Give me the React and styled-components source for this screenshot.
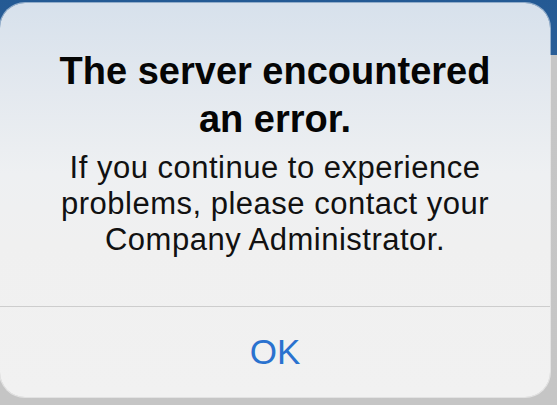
import React from "react";
import styled, { createGlobalStyle } from "styled-components";

const GlobalStyle = createGlobalStyle`
  html, body {
    margin: 0;
    padding: 0;
    background: #c6c6c6;
  }
`;

export default function App() {
  return (
    <>
      <GlobalStyle />
      <Screen>
        <Alert>
          <Message>
            <Title>
              The server encountered
              <br />
              an error.
            </Title>
            <Body>
              If you continue to experience
              <br />
              problems, please contact your
              <br />
              Company Administrator.
            </Body>
          </Message>
          <Actions>
            <ActionButton>OK</ActionButton>
          </Actions>
        </Alert>
      </Screen>
    </>
  );
}

const Screen = styled.div`
  width: 557px;
  height: 405px;
  overflow: hidden;
  background: linear-gradient(to bottom, #245a94 0, #2a5e97 55px, #c6c6c6 55px, #c5c5c5 100%);
  padding-top: 3px;
  box-sizing: border-box;
  font-family: "Liberation Sans", Arial, sans-serif;
`;

const Alert = styled.div`
  width: 550px;
  height: 394px;
  border-radius: 25px;
  overflow: hidden;
  display: flex;
  flex-direction: column;
  background: linear-gradient(to bottom, #d7e1ec 0, #e4e9ef 90px, #eef0f2 170px, #f0f0f0 240px, #f1f1f1 100%);
  box-shadow: 0 0 0 1px rgba(255, 255, 255, 0.5);
`;

const Message = styled.div`
  height: 304px;
  box-sizing: border-box;
  padding-top: 44px;
  display: flex;
  flex-direction: column;
  align-items: center;
  text-align: center;
  border-bottom: 1px solid #cdcdcd;
`;

const Title = styled.div`
  font-size: 38px;
  line-height: 48px;
  font-weight: 700;
  color: #050505;
`;

const Body = styled.div`
  margin-top: 7px;
  font-size: 31px;
  line-height: 36px;
  letter-spacing: 0.5px;
  color: #111111;
`;

const Actions = styled.div`
  flex: 1;
  display: flex;
  align-items: center;
  justify-content: center;
`;

const ActionButton = styled.button`
  border: none;
  background: none;
  padding: 0;
  font-family: "Liberation Sans", Arial, sans-serif;
  font-size: 35px;
  line-height: 40px;
  color: #2a72cf;
`;
